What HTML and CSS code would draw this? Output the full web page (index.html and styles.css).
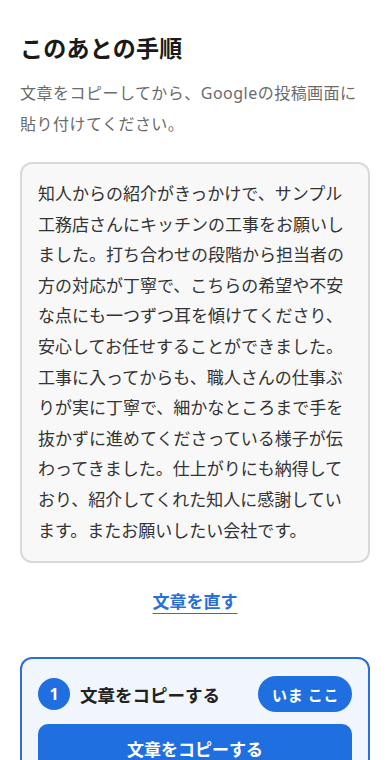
FILE: index.html
```html
<!DOCTYPE html>
<html lang="ja">
<head>
    <meta charset="UTF-8">
    <meta name="viewport" content="width=device-width, initial-scale=1.0">
    <title>このあとの手順</title>
    <link rel="stylesheet" href="styles.css">
</head>
<body>
    <main class="page">
        <h1 class="page-title">このあとの手順</h1>
        <p class="lead">文章をコピーしてから、Googleの投稿画面に貼り付けてください。</p>

        <div class="review-text">知人からの紹介がきっかけで、サンプル工務店さんにキッチンの工事をお願いしました。打ち合わせの段階から担当者の方の対応が丁寧で、こちらの希望や不安な点にも一つずつ耳を傾けてくださり、安心してお任せすることができました。工事に入ってからも、職人さんの仕事ぶりが実に丁寧で、細かなところまで手を抜かずに進めてくださっている様子が伝わってきました。仕上がりにも納得しており、紹介してくれた知人に感謝しています。またお願いしたい会社です。</div>

        <div class="edit-link-wrap">
            <a class="edit-link" href="#">文章を直す</a>
        </div>

        <section class="step current">
            <div class="step-head">
                <span class="step-num">1</span>
                <span class="step-title">文章をコピーする</span>
                <span class="badge">いま ここ</span>
            </div>
            <button class="primary-btn">文章をコピーする</button>
        </section>
    </main>
</body>
</html>
```

FILE: styles.css
```css
body {
    margin: 0;
    background: #fff;
    color: #222;
    font-family: "Noto Sans", "Noto Sans CJK JP", sans-serif;
}
.page {
    padding: 30px 20px 40px;
}
.page-title {
    font-size: 23px;
    font-weight: 700;
    line-height: 36px;
    margin: 0 0 12px;
    color: #1a1a1a;
    letter-spacing: 0.01em;
}
.lead {
    font-size: 16px;
    line-height: 31px;
    color: #6b6b6b;
    margin: 0 0 22px;
    letter-spacing: 0.03em;
}
.review-text {
    background: #f8f8f8;
    border: 2px solid #d9d9d9;
    border-radius: 12px;
    padding: 15px 16px;
    font-size: 17px;
    line-height: 30.6px;
    color: #333;
}
.edit-link-wrap {
    text-align: center;
    margin: 25px 0 44px;
}
.edit-link {
    color: #2a6fd6;
    font-size: 17px;
    font-weight: 700;
    text-underline-offset: 5px;
}
.step {
    border: 2px solid #2a6fd6;
    border-radius: 12px;
    background: #f1f6fd;
    padding: 17px 16px 16px;
}
.step-head {
    display: flex;
    align-items: center;
    gap: 10px;
    margin-bottom: 12px;
}
.step-num {
    width: 32px;
    height: 32px;
    border-radius: 50%;
    background: #1f6fe0;
    color: #fff;
    font-size: 16px;
    font-weight: 700;
    display: flex;
    align-items: center;
    justify-content: center;
}
.step-title {
    flex: 1;
    font-size: 17.5px;
    font-weight: 700;
    color: #222;
}
.badge {
    background: #1f6fe0;
    color: #fff;
    font-size: 15px;
    font-weight: 700;
    border-radius: 18px;
    padding: 0 13px 0 14px;
    height: 36px;
    display: flex;
    align-items: center;
    white-space: pre;
    letter-spacing: 0.04em;
}
.primary-btn {
    display: block;
    width: 100%;
    height: 48px;
    border: none;
    border-radius: 10px;
    background: #1f6fe0;
    color: #fff;
    font-family: inherit;
    font-size: 17px;
    font-weight: 700;
}
```
